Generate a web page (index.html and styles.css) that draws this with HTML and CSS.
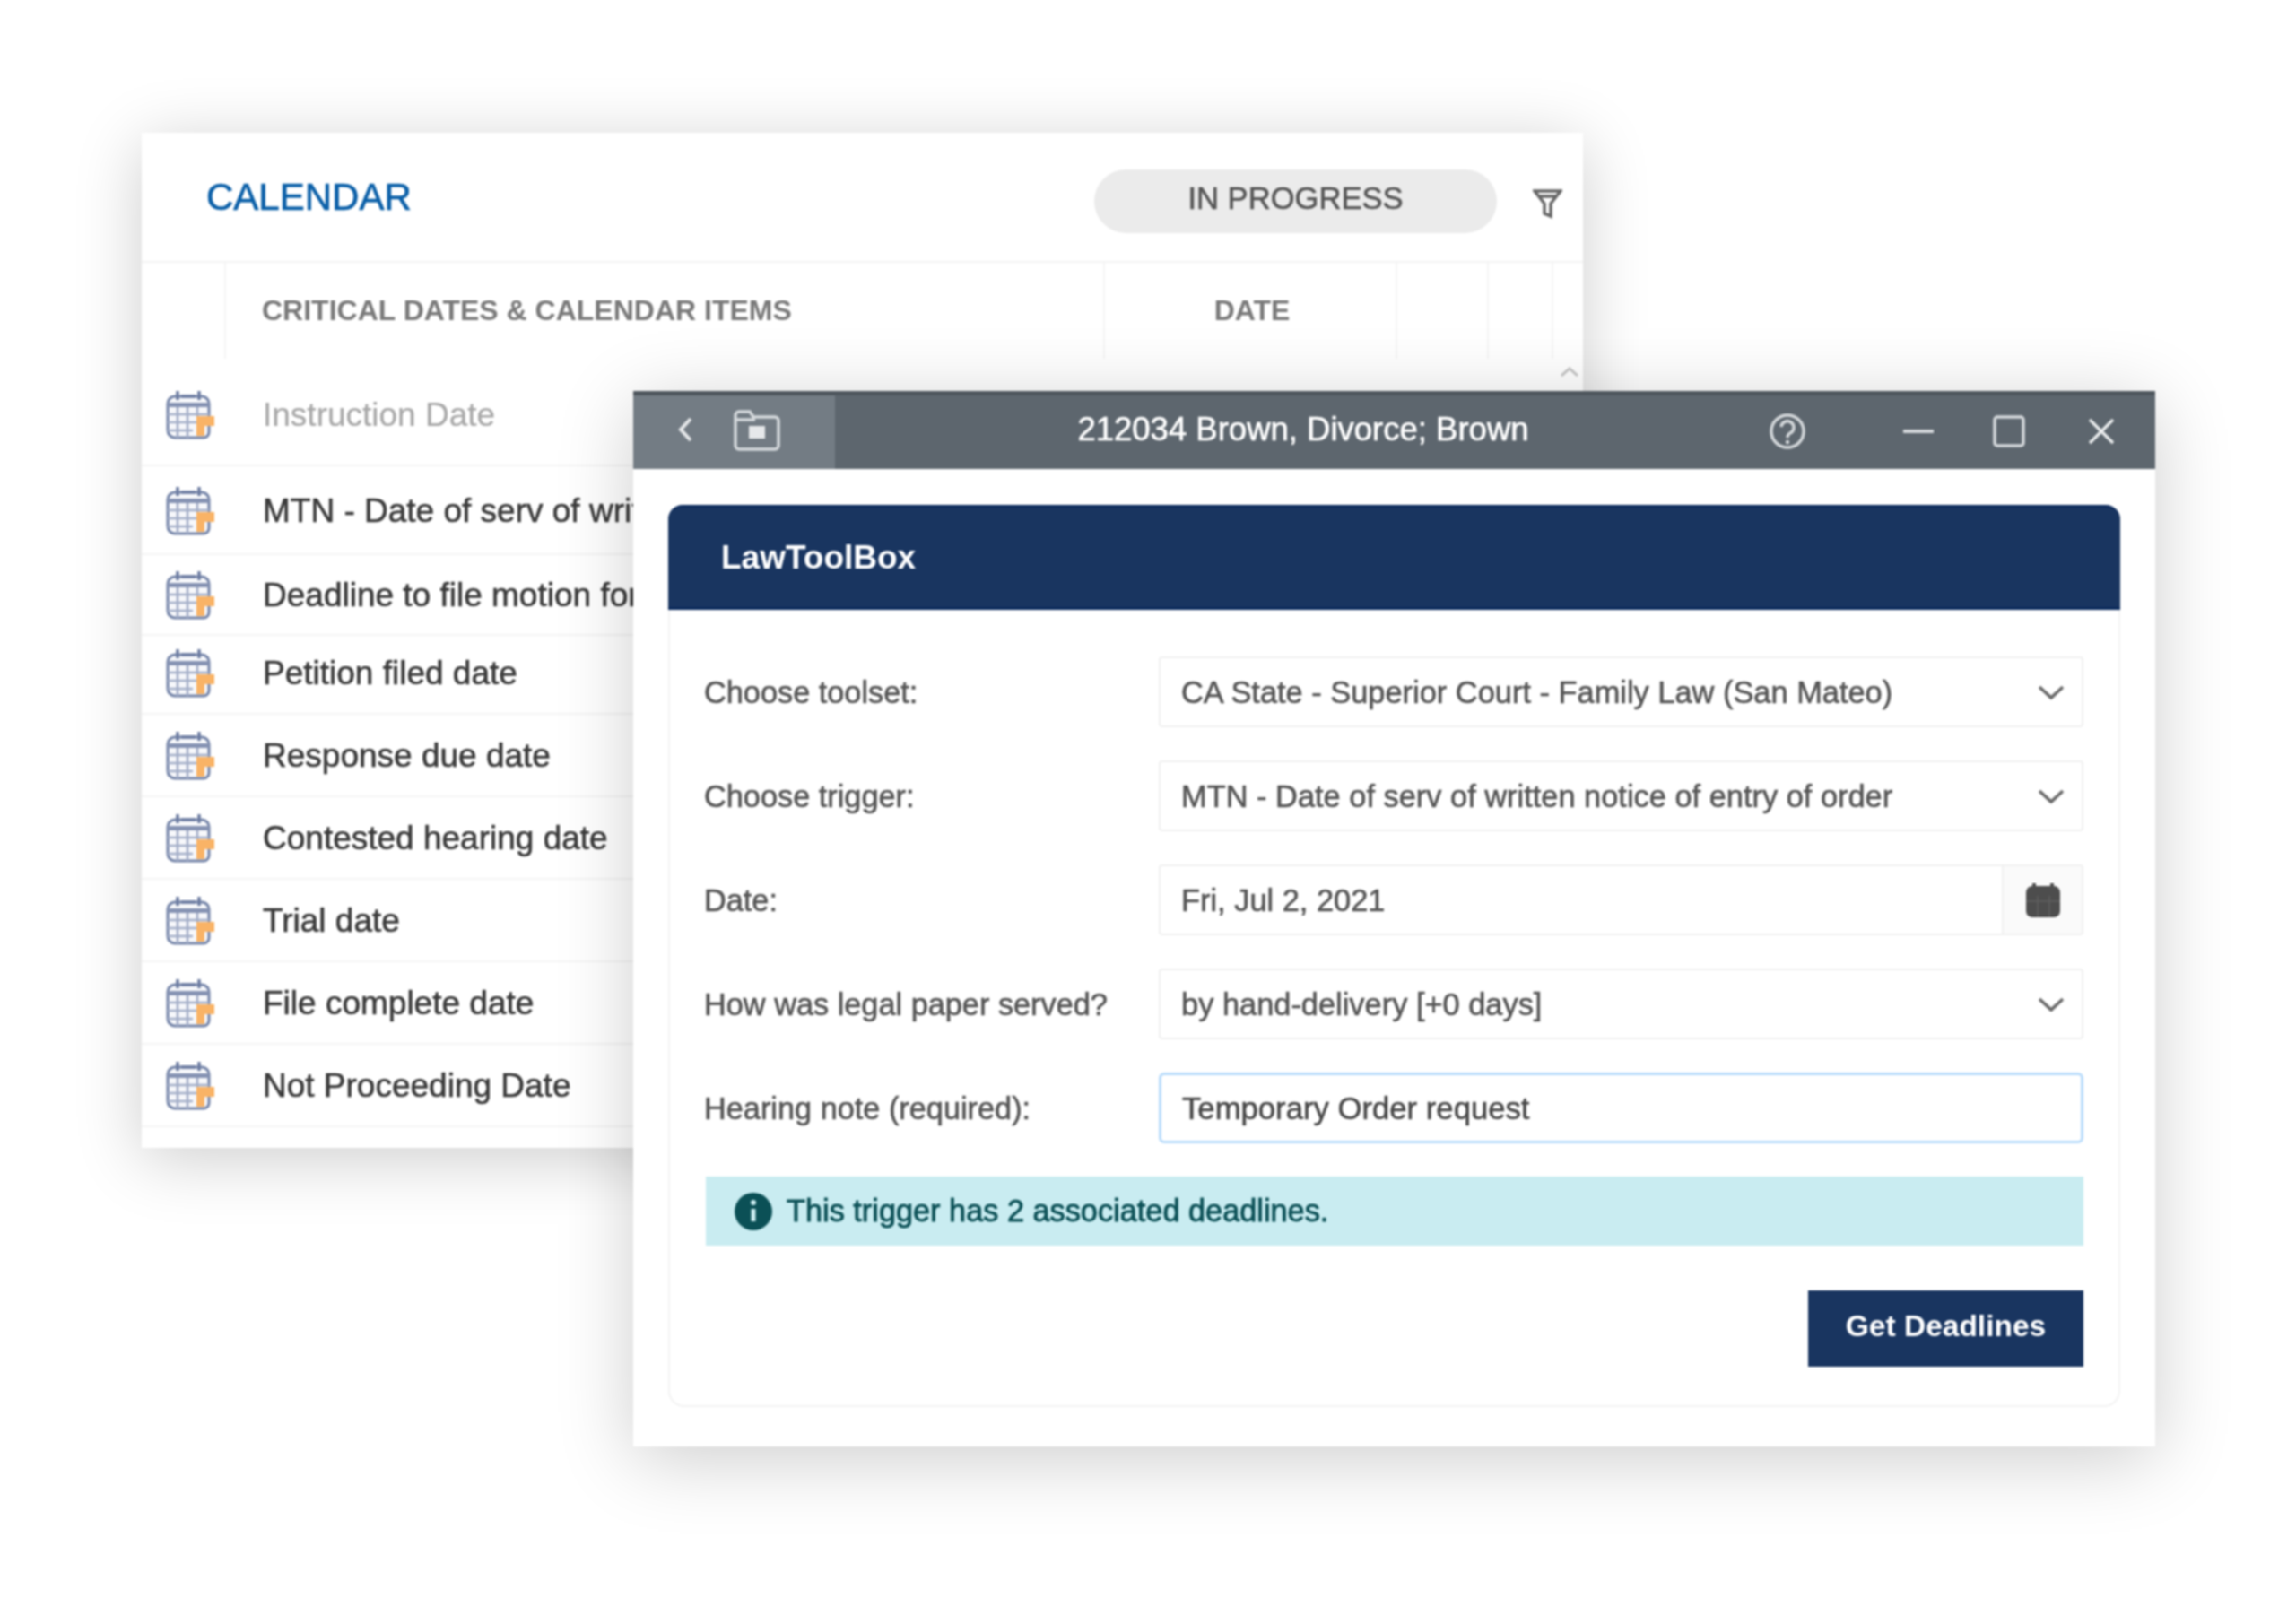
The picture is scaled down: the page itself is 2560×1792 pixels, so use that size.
FILE: index.html
```html
<!DOCTYPE html>
<html lang="en">
<head>
<meta charset="utf-8">
<title>LawToolBox</title>
<link rel="stylesheet" href="styles.css">
</head>
<body>
<svg class="defs" width="0" height="0" aria-hidden="true">
  <symbol id="cal" viewBox="0 0 56 56">
    <path d="M3 16a8 8 0 0 1 8-8h30a8 8 0 0 1 8 8v32a6 6 0 0 1-6 6H11a8 8 0 0 1-8-8z" fill="#f7f8fb" stroke="#7484a8" stroke-width="3"/>
    <path d="M3 15h46v5H3z" fill="#8693b3"/>
    <path d="M14 2v10M38 2v10M18 8h16" stroke="#6b7ba1" stroke-width="3.5" fill="none"/>
    <path d="M3 28h46M3 37h46M3 46h28M14 20v34M25 20v34M36 20v10" stroke="#a3aec8" stroke-width="2.6" fill="none"/>
    <path d="M35 30h20v11H44v11H35z" fill="#f9b366"/>
  </symbol>
  <symbol id="chev" viewBox="0 0 32 18">
    <path d="M3 3l13 12L29 3" fill="none" stroke="#666" stroke-width="3.5"/>
  </symbol>
</svg>

<main class="stage">
  <section class="card back">
    <header class="back-head">
      <h2 class="back-title">CALENDAR</h2>
      <span class="pill">IN PROGRESS</span>
      <svg class="filter" viewBox="0 0 33 34"><path d="M2 3h29L20 17v14l-7-3V17zM6 9h21" fill="none" stroke="#666" stroke-width="3.5"/></svg>
    </header>
    <div class="thead">
      <div class="th th-a"></div>
      <div class="th th-b">CRITICAL DATES &amp; CALENDAR ITEMS</div>
      <div class="th th-c">DATE</div>
      <div class="th th-d"></div>
      <div class="th th-e"></div>
      <div class="th th-f"></div>
      <svg class="scroll-up" viewBox="0 0 22 12"><path d="M2 10l9-8 9 8" fill="none" stroke="#c4c4c4" stroke-width="3"/></svg>
    </div>
    <ul class="rows">
      <li class="row row-first muted"><svg class="cal"><use href="#cal"/></svg><span class="row-text">Instruction Date</span></li>
      <li class="row row-tall"><svg class="cal"><use href="#cal"/></svg><span class="row-text">MTN - Date of serv of written</span></li>
      <li class="row row-mid"><svg class="cal"><use href="#cal"/></svg><span class="row-text">Deadline to file motion for</span></li>
      <li class="row row-short"><svg class="cal"><use href="#cal"/></svg><span class="row-text">Petition filed date</span></li>
      <li class="row"><svg class="cal"><use href="#cal"/></svg><span class="row-text">Response due date</span></li>
      <li class="row"><svg class="cal"><use href="#cal"/></svg><span class="row-text">Contested hearing date</span></li>
      <li class="row"><svg class="cal"><use href="#cal"/></svg><span class="row-text">Trial date</span></li>
      <li class="row"><svg class="cal"><use href="#cal"/></svg><span class="row-text">File complete date</span></li>
      <li class="row"><svg class="cal"><use href="#cal"/></svg><span class="row-text">Not Proceeding Date</span></li>
    </ul>
  </section>

  <section class="card front">
    <header class="titlebar">
      <div class="tb-left">
        <svg class="tb-back" viewBox="0 0 18 30"><path d="M15 3L4 15l11 12" fill="none" stroke="#e6e8ea" stroke-width="4"/></svg>
        <svg class="tb-folder" viewBox="0 0 54 48"><path d="M3 8a4 4 0 0 1 4-4h12l4 6h24a4 4 0 0 1 4 4v28a4 4 0 0 1-4 4H7a4 4 0 0 1-4-4zM3 13h22" fill="none" stroke="#d4d8db" stroke-width="3.5"/><path d="M18 20h18v14H18z" fill="#e6e8ea"/></svg>
      </div>
      <div class="tb-title">212034 Brown, Divorce; Brown</div>
      <div class="tb-controls">
        <svg class="tb-help" viewBox="0 0 42 42"><circle cx="21" cy="21" r="18" fill="none" stroke="#d4d8db" stroke-width="3.5"/><path d="M14 16a7 7 0 1 1 10 7c-2 1-3 2-3 5" fill="none" stroke="#d4d8db" stroke-width="3.5"/><circle cx="21" cy="33" r="2.2" fill="#d4d8db"/></svg>
        <svg class="tb-min" viewBox="0 0 34 6"><path d="M0 3h34" stroke="#d4d8db" stroke-width="4"/></svg>
        <svg class="tb-max" viewBox="0 0 36 36"><rect x="2" y="2" width="32" height="32" rx="3" fill="none" stroke="#d4d8db" stroke-width="3.5"/></svg>
        <svg class="tb-close" viewBox="0 0 30 30"><path d="M2 2l26 26M28 2L2 28" stroke="#eceeef" stroke-width="3.2"/></svg>
      </div>
    </header>
    <div class="panel">
      <div class="panel-head">LawToolBox</div>
      <form class="form">
        <div class="field">
          <label class="label">Choose toolset:</label>
          <div class="control"><span class="value">CA State - Superior Court - Family Law (San Mateo)</span><svg class="chev"><use href="#chev"/></svg></div>
        </div>
        <div class="field">
          <label class="label">Choose trigger:</label>
          <div class="control"><span class="value">MTN - Date of serv of written notice of entry of order</span><svg class="chev"><use href="#chev"/></svg></div>
        </div>
        <div class="field">
          <label class="label">Date:</label>
          <div class="control has-addon"><span class="value">Fri, Jul 2, 2021</span>
            <span class="addon"><svg class="addon-cal" viewBox="0 0 40 38"><rect x="1" y="3" width="38" height="35" rx="7" fill="#4d4d4d"/><path d="M10 0v6M30 0v6" stroke="#4d4d4d" stroke-width="4"/><path d="M1 20h38M14 14v24M27 14v24" stroke="#5f5f5f" stroke-width="1.5"/></svg></span>
          </div>
        </div>
        <div class="field">
          <label class="label">How was legal paper served?</label>
          <div class="control"><span class="value">by hand-delivery [+0 days]</span><svg class="chev"><use href="#chev"/></svg></div>
        </div>
        <div class="field">
          <label class="label">Hearing note (required):</label>
          <div class="control focus"><span class="value">Temporary Order request</span></div>
        </div>
        <div class="alert">
          <svg class="info" viewBox="0 0 42 42"><circle cx="21" cy="21" r="21" fill="#0b5056"/><path d="M21 18v14" stroke="#cdeef2" stroke-width="5"/><circle cx="21" cy="11" r="3" fill="#cdeef2"/></svg>
          <span>This trigger has 2 associated deadlines.</span>
        </div>
        <div class="actions"><button type="button" class="btn">Get Deadlines</button></div>
      </form>
    </div>
  </section>
</main>
</body>
</html>
```

FILE: styles.css
```css
* { box-sizing: border-box; }
html, body { margin: 0; padding: 0; background: #fff; }
body { width: 2560px; height: 1792px; overflow: hidden; font-family: "Liberation Sans", Arial, sans-serif; color: #333; }
.defs { position: absolute; }
.stage { position: relative; width: 2560px; height: 1792px; filter: blur(1.1px); }
.card { position: absolute; background: #fff; }

/* back card */
.back { left: 158px; top: 148px; width: 1607px; height: 1132px; overflow: hidden; border-radius: 4px; }
.stage::before { content: ""; position: absolute; left: 158px; top: 148px; width: 1607px; height: 1132px; box-shadow: 0 12px 70px rgba(0,0,0,.2); }
.back-head { display: flex; align-items: center; height: 145px; padding: 0 23px 0 72px; border-bottom: 2px solid #f3f3f3; }
.back-title { margin: 0; font-size: 42px; font-weight: 400; color: #0a5fa8; -webkit-text-stroke: .7px #0a5fa8; line-height: 1; }
.pill { margin-left: auto; margin-top: 10px; width: 449px; height: 71px; padding-bottom: 6px; display: flex; align-items: center; justify-content: center; border-radius: 36px; background: #ebebeb; font-size: 34.6px; color: #555; -webkit-text-stroke: .6px #555; }
.filter { width: 33px; height: 34px; margin-left: 40px; margin-top: 14px; }
.thead { position: relative; display: flex; height: 107px; }
.th { height: 100%; border-right: 2px solid #f5f5f5; display: flex; align-items: center; font-size: 32px; font-weight: 700; color: #7a7a7a; }
.th-a { width: 94px; }
.th-b { width: 980px; padding-left: 40px; }
.th-c { width: 326px; padding-left: 4px; justify-content: center; }
.th-d { width: 102px; }
.th-e { width: 72px; }
.th-f { border-right: 0; flex: 1; }
.scroll-up { position: absolute; right: 4px; top: 116px; width: 22px; height: 12px; }
.rows { list-style: none; margin: 0; padding: 0; }
.row { display: flex; align-items: center; height: 92px; gap: 53px; padding-left: 26px; border-bottom: 2px solid #f4f4f4; font-size: 37px; color: #3a3a3a; white-space: nowrap; -webkit-text-stroke: .6px #3a3a3a; }
.row-text { padding-top: 2px; }
.row-first { height: 120px; padding-top: 6px; }
.row-tall { height: 99px; }
.row-mid { height: 90px; }
.row-short { height: 88px; padding-bottom: 5px; }
.muted { color: #a8a8a8; -webkit-text-stroke: .2px #a8a8a8; }
.cal { width: 56px; height: 56px; flex: none; }

/* front window */
.front { left: 706px; top: 436px; width: 1697px; height: 1177px; box-shadow: 0 14px 80px rgba(0,0,0,.2); }
.titlebar { display: flex; align-items: center; height: 87px; background: #5d666e; border-top: 5px solid #4f575e; color: #fff; }
.tb-left { display: flex; align-items: center; width: 225px; height: 100%; background: #737c84; padding: 0 0 6px 49px; gap: 44px; }
.tb-back { width: 18px; height: 30px; }
.tb-folder { width: 54px; height: 48px; }
.tb-title { width: 1041px; padding: 0 0 6px 3px; text-align: center; font-size: 36.5px; -webkit-text-stroke: .6px #fff; }
.tb-controls { display: flex; align-items: center; padding-bottom: 3px; }
.tb-help { width: 42px; height: 42px; }
.tb-min { width: 34px; height: 6px; margin-left: 108px; }
.tb-max { width: 36px; height: 36px; margin-left: 66px; }
.tb-close { width: 30px; height: 30px; margin-left: 70px; }
.panel { margin: 40px 39px 0; height: 1006px; border: 2px solid #f3f3f3; border-top: 0; border-radius: 18px; background: #fff; }
.panel-head { margin: 0 -2px; height: 117px; display: flex; align-items: center; padding-left: 59px; background: #193560; border-top: 3px solid #0b2a5c; border-bottom: 3px solid #0b2a5c; border-radius: 16px 16px 0 0; color: #fff; font-size: 37px; font-weight: 700; }
.form { display: flex; flex-direction: column; gap: 37px; padding: 52px 39px 0 38px; }
.field { display: flex; align-items: center; height: 79px; }
.label { width: 507px; padding-top: 2px; font-size: 34.3px; color: #555; -webkit-text-stroke: .6px #555; white-space: nowrap; }
.control { flex: 1; height: 100%; display: flex; align-items: center; justify-content: space-between; padding: 0 18px 0 23px; border: 2px solid #f0f0f0; border-radius: 4px; font-size: 34.4px; color: #555; -webkit-text-stroke: .6px #555; }
.value { white-space: nowrap; padding-top: 2px; }
.chev { width: 32px; height: 18px; flex: none; }
.has-addon { padding-right: 0; }
.addon { display: flex; align-items: center; justify-content: center; width: 89px; height: 100%; background: #fafafa; border-left: 2px solid #f0f0f0; }
.addon-cal { width: 40px; height: 38px; }
.focus { border: 3px solid #b9dcfb; border-radius: 6px; color: #444; font-size: 34.7px; }
.alert { display: flex; align-items: center; gap: 16px; height: 77px; padding-left: 32px; margin-left: 2px; background: #c9ecf1; color: #0b5056; font-size: 34.3px; -webkit-text-stroke: .8px #0b5056; }
.info { width: 42px; height: 42px; }
.actions { display: flex; justify-content: flex-end; margin-top: 13px; }
.btn { width: 307px; height: 85px; padding: 0 0 6px; background: #193560; border: 0; color: #fff; font: 700 33.5px "Liberation Sans", Arial, sans-serif; }
```
